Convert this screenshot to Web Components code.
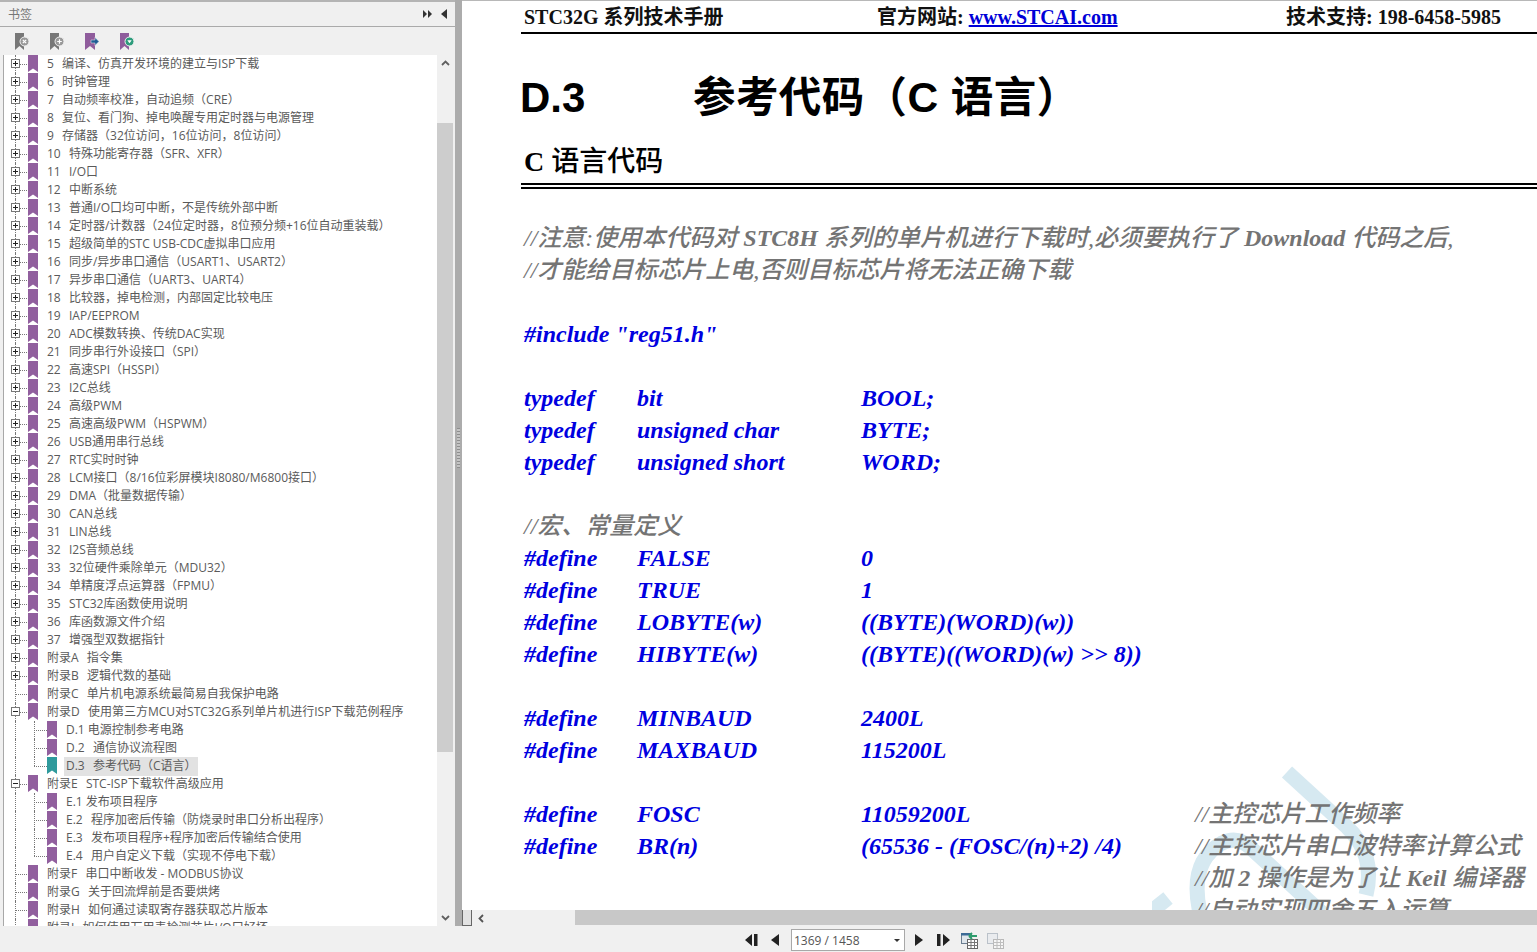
<!doctype html>
<html lang="zh-CN"><head><meta charset="utf-8"><title>STC32G</title>
<style>html,body{margin:0;height:100%;overflow:hidden;background:#f0f0f0}</style></head>
<body><app-shell></app-shell>
<script>
const BM=(c)=>`<svg width="10" height="17" viewBox="0 0 10 17"><path d="M0 0H10V17L5 13.5 0 17Z" fill="${c}"/></svg>`;
class BookmarkToolbar extends HTMLElement{connectedCallback(){this.attachShadow({mode:'open'}).innerHTML=`<style>:host{display:flex;height:28px;align-items:center;padding-left:15px;gap:21px;background:#f0f0f0;box-sizing:border-box}svg{display:block}</style>
<svg width="14" height="17" viewBox="0 0 14 17"><path d="M0 0H9V17L4.500 13 0 17Z" fill="#777"/><circle cx="9.500" cy="8.500" r="4.500" fill="#999" stroke="#f0f0f0"/><path d="M7.800 6.800l3.400 3.400M11.200 6.800l-3.400 3.400" stroke="#fff" stroke-width="1.200"/></svg>
<svg width="14" height="17" viewBox="0 0 14 17"><path d="M0 0H9V17L4.500 13 0 17Z" fill="#777"/><circle cx="9.500" cy="8.500" r="4.500" fill="#999" stroke="#f0f0f0"/><path d="M7.200 8.500h4.600M9.500 6.200v4.600" stroke="#fff" stroke-width="1.200"/></svg>
<svg width="14" height="17" viewBox="0 0 14 17"><path d="M0 0H10V17L5 13 0 17Z" fill="#8f5c9c"/><path d="M6 7h4V4.500L14 8.500 10 12.500V10H6Z" fill="#1f5c94" stroke="#f0f0f0" stroke-width=".5"/></svg>
<svg width="14" height="17" viewBox="0 0 14 17"><path d="M0 0H9V17L4.500 13 0 17Z" fill="#8f5c9c"/><circle cx="9.500" cy="8.500" r="4.500" fill="#2d9c7c" stroke="#f0f0f0"/><path d="M7.300 7.200h4.400L9.500 10.300Z" fill="#fff"/></svg>`}}
customElements.define('bookmark-toolbar',BookmarkToolbar);

class TreeRow extends HTMLElement{connectedCallback(){
 const lvl=+this.getAttribute('level')||0,st=this.getAttribute('state')||'',sel=this.hasAttribute('selected');
 const box=st?`<span class="box"><i></i>${st=='plus'?'<b></b>':''}</span>`:'';
 this.attachShadow({mode:'open'}).innerHTML=`<style>
 :host{display:flex;height:18px;position:relative;align-items:center;white-space:pre;font:12px/18px "Open Sans","Noto Sans CJK SC",sans-serif;color:#5a5a5a}
 .v{position:absolute;left:15px;top:0;bottom:0;border-left:1px dotted #777}
 .v2{position:absolute;left:34px;top:0;height:${this.hasAttribute('last')?'9px':'18px'};border-left:1px dotted #777}
 .h{position:absolute;top:9px;left:${lvl?34:15}px;width:${lvl?13:12}px;border-top:1px dotted #777}
 .box{position:absolute;left:11px;top:4px;width:7px;height:7px;border:1px solid #777;background:#fff;z-index:1}
 .box i{position:absolute;left:1px;right:1px;top:3px;height:1px;background:#222}
 .box b{position:absolute;top:1px;bottom:1px;left:3px;width:1px;background:#222}
 svg{position:absolute;left:${lvl?47:28}px;top:0;z-index:1}
 .t{position:absolute;left:${lvl?64:45}px;top:0;padding:0 1px 0 2px;height:19px;${sel?'background:#e2e2e2;':''}}
 </style><span class="v"></span>${lvl?'<span class="v2"></span>':''}<span class="h"></span>${box}${BM(sel?'#2f9a9c':'#915f9e')}<span class="t"><slot></slot></span>`}}
customElements.define('tree-row',TreeRow);

const rows=`5  编译、仿真开发环境的建立与ISP下载
6  时钟管理
7  自动频率校准，自动追频（CRE）
8  复位、看门狗、掉电唤醒专用定时器与电源管理
9  存储器（32位访问，16位访问，8位访问）
10  特殊功能寄存器（SFR、XFR）
11  I/O口
12  中断系统
13  普通I/O口均可中断，不是传统外部中断
14  定时器/计数器（24位定时器，8位预分频+16位自动重装载）
15  超级简单的STC USB-CDC虚拟串口应用
16  同步/异步串口通信（USART1、USART2）
17  异步串口通信（UART3、UART4）
18  比较器，掉电检测，内部固定比较电压
19  IAP/EEPROM
20  ADC模数转换、传统DAC实现
21  同步串行外设接口（SPI）
22  高速SPI（HSSPI）
23  I2C总线
24  高级PWM
25  高速高级PWM（HSPWM）
26  USB通用串行总线
27  RTC实时时钟
28  LCM接口（8/16位彩屏模块I8080/M6800接口）
29  DMA（批量数据传输）
30  CAN总线
31  LIN总线
32  I2S音频总线
33  32位硬件乘除单元（MDU32）
34  单精度浮点运算器（FPMU）
35  STC32库函数使用说明
36  库函数源文件介绍
37  增强型双数据指针
附录A  指令集
附录B  逻辑代数的基础
-附录C  单片机电源系统最简易自我保护电路
=附录D  使用第三方MCU对STC32G系列单片机进行ISP下载范例程序
>D.1 电源控制参考电路
>D.2  通信协议流程图
*D.3  参考代码（C语言）
=附录E  STC-ISP下载软件高级应用
>E.1 发布项目程序
>E.2  程序加密后传输（防烧录时串口分析出程序）
>E.3  发布项目程序+程序加密后传输结合使用
^E.4  用户自定义下载（实现不停电下载）
-附录F  串口中断收发 - MODBUS协议
-附录G  关于回流焊前是否要烘烤
-附录H  如何通过读取寄存器获取芯片版本
-附录I  如何使用万用表检测芯片I/O口好坏`.split('\n');

class BookmarkPanel extends HTMLElement{connectedCallback(){
 const items=rows.map(r=>{const c=r[0];const txt=r.replace(/^[-=>*^]/,'').replace('  ','  <span style="margin-left:2px"></span>');
  if(c=='-')return `<tree-row>${txt}</tree-row>`;
  if(c=='=')return `<tree-row state="minus">${txt}</tree-row>`;
  if(c=='>')return `<tree-row level="1">${txt}</tree-row>`;
  if(c=='*')return `<tree-row level="1" selected last>${txt}</tree-row>`;
  if(c=='^')return `<tree-row level="1" last>${txt}</tree-row>`;
  return `<tree-row state="plus">${txt}</tree-row>`}).join('');
 this.attachShadow({mode:'open'}).innerHTML=`<style>
 :host{display:flex;flex-direction:column;width:455px;flex:none;background:#f0f0f0;box-sizing:border-box;border-top:2px solid #b4b4b4;overflow:hidden}
 .title{height:24px;display:flex;align-items:center;justify-content:space-between;border-bottom:1px solid #aaa;padding:0 8px 0 8px;font:12px "Open Sans","Noto Sans CJK SC",sans-serif;color:#777}
 .title svg{display:block}
 .ctl{display:flex;gap:8px;align-items:center}
 .body{flex:1;min-height:0;display:flex;padding-right:2px}
 .tree{flex:1;background:#fff;overflow:hidden;min-width:0;border-left:1px solid #a8a8a8;margin-left:3px;}
 .inner{margin-left:-4px}
 .sb{width:16px;background:#f0f0f0;display:flex;flex-direction:column;align-items:center;flex:none}
 .sb svg{display:block;margin:5px 0}
 .thumb{width:16px;height:629px;background:#cdcdcd;margin-top:52px}
 .sp{flex:1}
 </style>
 <div class="title"><span>书签</span><span class="ctl"><svg width="10" height="8" viewBox="0 0 10 8"><path d="M0 0l4 4-4 4ZM5 0l4 4-4 4Z" fill="#333"/></svg><svg width="6" height="10" viewBox="0 0 6 10"><path d="M6 0v10L0 5Z" fill="#333"/></svg></span></div>
 <bookmark-toolbar></bookmark-toolbar>
 <div class="body"><div class="tree"><div class="inner">${items}</div></div>
 <div class="sb"><svg width="9" height="6" viewBox="0 0 9 6"><path d="M1 5l3.500-3.500L8 5" fill="none" stroke="#606060" stroke-width="1.800"/></svg><div class="thumb"></div><span class="sp"></span><svg width="9" height="6" viewBox="0 0 9 6"><path d="M1 1l3.500 3.500L8 1" fill="none" stroke="#606060" stroke-width="1.800"/></svg></div></div>`}}
customElements.define('bookmark-panel',BookmarkPanel);

class PanelSplitter extends HTMLElement{connectedCallback(){this.attachShadow({mode:'open'}).innerHTML=`<style>:host{display:flex;align-items:center;justify-content:center;width:7px;flex:none;background:#acacac}i{display:block;width:3px;height:40px;margin-top:-30px;background:repeating-linear-gradient(#8e8e8e 0 1px,#c4c4c4 1px 3px)}</style><i></i>`}}
customElements.define('panel-splitter',PanelSplitter);

class CodeLine extends HTMLElement{connectedCallback(){
 this.attachShadow({mode:'open'}).innerHTML=`<style>
 :host{display:grid;grid-template-columns:113px 224px 334px 1fr;height:32px;line-height:32px;white-space:pre;font:italic bold 24px/32px "Liberation Serif","Noto Sans CJK SC",serif;color:#0000e0}
 ::slotted(.c){color:#747474;font-weight:500}
 </style><slot></slot>`}}
customElements.define('code-line',CodeLine);

class RunningHead extends HTMLElement{connectedCallback(){this.attachShadow({mode:'open'}).innerHTML=`<style>
 :host{display:grid;grid-template-columns:353px 409px 1fr;height:31px;margin-left:-3px;padding-left:3px;border-bottom:2px solid #000;font:bold 20px/32px "Liberation Serif","Noto Sans CJK SC",serif;color:#111;white-space:pre}
 a{color:#0000d8;text-decoration:underline}
 </style><span>STC32G 系列技术手册</span><span>官方网站: <a>www.STCAI.com</a></span><span>技术支持: 198-6458-5985</span>`}}
customElements.define('running-head',RunningHead);

class PdfPage extends HTMLElement{connectedCallback(){
 const L=(a,b,c,d)=>`<code-line><span>${a||''}</span><span>${b||''}</span><span>${c||''}</span>${d?`<span class="c">${d}</span>`:''}</code-line>`;
 const C=t=>`<code-line><span class="c" style="grid-column:1/-1">${t}</span></code-line>`;
 const B=()=>`<code-line></code-line>`;
 this.attachShadow({mode:'open'}).innerHTML=`<style>
 :host{display:block;flex:1;min-height:0;background:#fff;position:relative;overflow:hidden;border-top:1px solid #b8b8b8;box-sizing:border-box}
 .wm{position:absolute;left:690px;top:760px}
 .wrap{position:relative;padding-left:62px}
 h1{margin:0;height:92px;display:flex;align-items:center;font:bold 42px/1 "Liberation Sans","Noto Sans CJK SC",sans-serif;color:#000;margin-top:18px;margin-left:-4px;white-space:pre}
 h1 b{width:173px;flex:none;font-weight:bold}
 h1 span{font-size:42.500px;letter-spacing:.4px}
 h2{margin:0;height:41px;font:500 28px/36px "Liberation Serif","Noto Sans CJK SC",serif;color:#000;border-bottom:2px solid #000;box-sizing:border-box;margin-left:-3px;padding-left:3px}
 .dbl{margin-left:-3px;height:0;border-bottom:2px solid #000;margin-top:2px}
 .code{margin-top:33px}
 </style>
 <svg class="wm" width="385" height="160" viewBox="0 0 385 160"><g fill="none" stroke="#d6e9f1" stroke-width="15"><path d="M135 11 195 66Q224 94 214 134"/><path d="M50 160Q34 102 70 82 86 74 100 88L170 152"/><path d="M-4 153 16 137"/></g></svg>
 <div class="wrap">
 <running-head></running-head>
 <h1><b>D.3</b><span>参考代码（C 语言）</span></h1>
 <h2><b>C</b> 语言代码</h2>
 <div class="dbl"></div>
 <div class="code">
 ${C('//注意:使用本代码对 <b>STC8H</b> 系列的单片机进行下载时,必须要执行了 <b>Download</b> 代码之后,')}
 ${C('//才能给目标芯片上电,否则目标芯片将无法正确下载')}
 ${B()}
 <code-line><span style="grid-column:1/-1">#include "reg51.h"</span></code-line>
 ${B()}
 ${L('typedef','bit','BOOL;')}
 ${L('typedef','unsigned char','BYTE;')}
 ${L('typedef','unsigned short','WORD;')}
 ${B()}
 ${C('//宏、常量定义')}
 ${L('#define','FALSE','0')}
 ${L('#define','TRUE','1')}
 ${L('#define','LOBYTE(w)','((BYTE)(WORD)(w))')}
 ${L('#define','HIBYTE(w)','((BYTE)((WORD)(w) &gt;&gt; 8))')}
 ${B()}
 ${L('#define','MINBAUD','2400L')}
 ${L('#define','MAXBAUD','115200L')}
 ${B()}
 ${L('#define','FOSC','11059200L','//主控芯片工作频率')}
 ${L('#define','BR(n)','(65536 - (FOSC/(n)+2) /4)','//主控芯片串口波特率计算公式')}
 ${L('','','','//加 <b>2</b> 操作是为了让 <b>Keil</b> 编译器')}
 ${L('','','','//自动实现四舍五入运算')}
 </div></div>`}}
customElements.define('pdf-page',PdfPage);

class HScroll extends HTMLElement{connectedCallback(){this.attachShadow({mode:'open'}).innerHTML=`<style>
 :host{display:flex;height:16px;flex:none;background:#f0f0f0;align-items:stretch}
 .h{width:8px;border:1px solid #666;background:#e2e2e2;margin-top:-1px;flex:none}
 .a{width:103px;flex:none;display:flex;align-items:center;padding-left:6px;box-sizing:border-box}
 .t{flex:1;background:#c8c8c8;height:15px}
 </style><span class="h"></span><span class="a"><svg width="6" height="9" viewBox="0 0 6 9"><path d="M5 1 1.500 4.500 5 8" fill="none" stroke="#555" stroke-width="1.800"/></svg></span><span class="t"></span>`}}
customElements.define('h-scroll',HScroll);

class NavBar extends HTMLElement{connectedCallback(){this.attachShadow({mode:'open'}).innerHTML=`<style>
 :host{display:flex;height:26px;flex:none;background:#f0f0f0;align-items:center;padding:2px 0 0 745px;box-sizing:border-box}
 svg{display:block;flex:none}
 .sel{width:114px;height:22px;border:1px solid #a8a8a8;background:#fff;box-sizing:border-box;margin:0 9px 0 11px;display:flex;align-items:center;justify-content:space-between;padding:0 4px 0 2px;font:12px "Open Sans",sans-serif;color:#555;position:relative}
 .sel i{border:3px solid transparent;border-top:3px solid #333;border-bottom:0;width:0;height:0}
 </style>
 <svg width="13" height="12" viewBox="0 0 13 12"><path d="M7 0v12L0 6ZM9 0h3.500v12H9Z" fill="#222"/></svg>
 <svg width="9" height="12" viewBox="0 0 9 12" style="margin-left:13px"><path d="M8 0v12L0 6Z" fill="#222"/></svg>
 <span class="sel"><span>1369 / 1458</span><i></i></span>
 <svg width="9" height="12" viewBox="0 0 9 12"><path d="M1 0v12L9 6Z" fill="#222"/></svg>
 <svg width="13" height="12" viewBox="0 0 13 12" style="margin-left:14px"><path d="M6 0v12L13 6ZM0 0h3.500v12H0Z" fill="#222"/></svg>
 <svg width="18" height="17" viewBox="0 0 18 17" style="margin-left:11px"><rect x="0.500" y="1.500" width="10" height="10" fill="#dfe6ec" stroke="#6a7d90"/><rect x="0" y="1" width="10" height="2.500" fill="#3c6a96"/><rect x="6.500" y="7.500" width="10" height="9" fill="#fff" stroke="#666"/><path d="M6 10.500h11M6 13.500h11M10 7v9M13.500 7v9" stroke="#777"/><path d="M8 4h8M8 4l3-3M8 4l3 3" stroke="#2d9c6c" stroke-width="1.800" fill="none"/></svg>
 <svg width="18" height="17" viewBox="0 0 18 17" style="margin-left:8px;opacity:.4"><rect x="0.500" y="1.500" width="10" height="10" fill="#dfe6ec" stroke="#6a7d90"/><rect x="6.500" y="7.500" width="10" height="9" fill="#fff" stroke="#666"/><path d="M6 10.500h11M6 13.500h11M10 7v9M13.500 7v9" stroke="#777"/></svg>`}}
customElements.define('nav-bar',NavBar);

class AppShell extends HTMLElement{connectedCallback(){this.attachShadow({mode:'open'}).innerHTML=`<style>
 :host{display:flex;flex-direction:column;height:952px;width:1537px;overflow:hidden;background:#f0f0f0}
 .top{height:926px;display:flex;flex:none}
 .view{flex:1;min-width:0;display:flex;flex-direction:column}
 </style><div class="top"><bookmark-panel></bookmark-panel><panel-splitter></panel-splitter><div class="view"><pdf-page></pdf-page><h-scroll></h-scroll></div></div><nav-bar></nav-bar>`}}
customElements.define('app-shell',AppShell);
</script></body></html>
